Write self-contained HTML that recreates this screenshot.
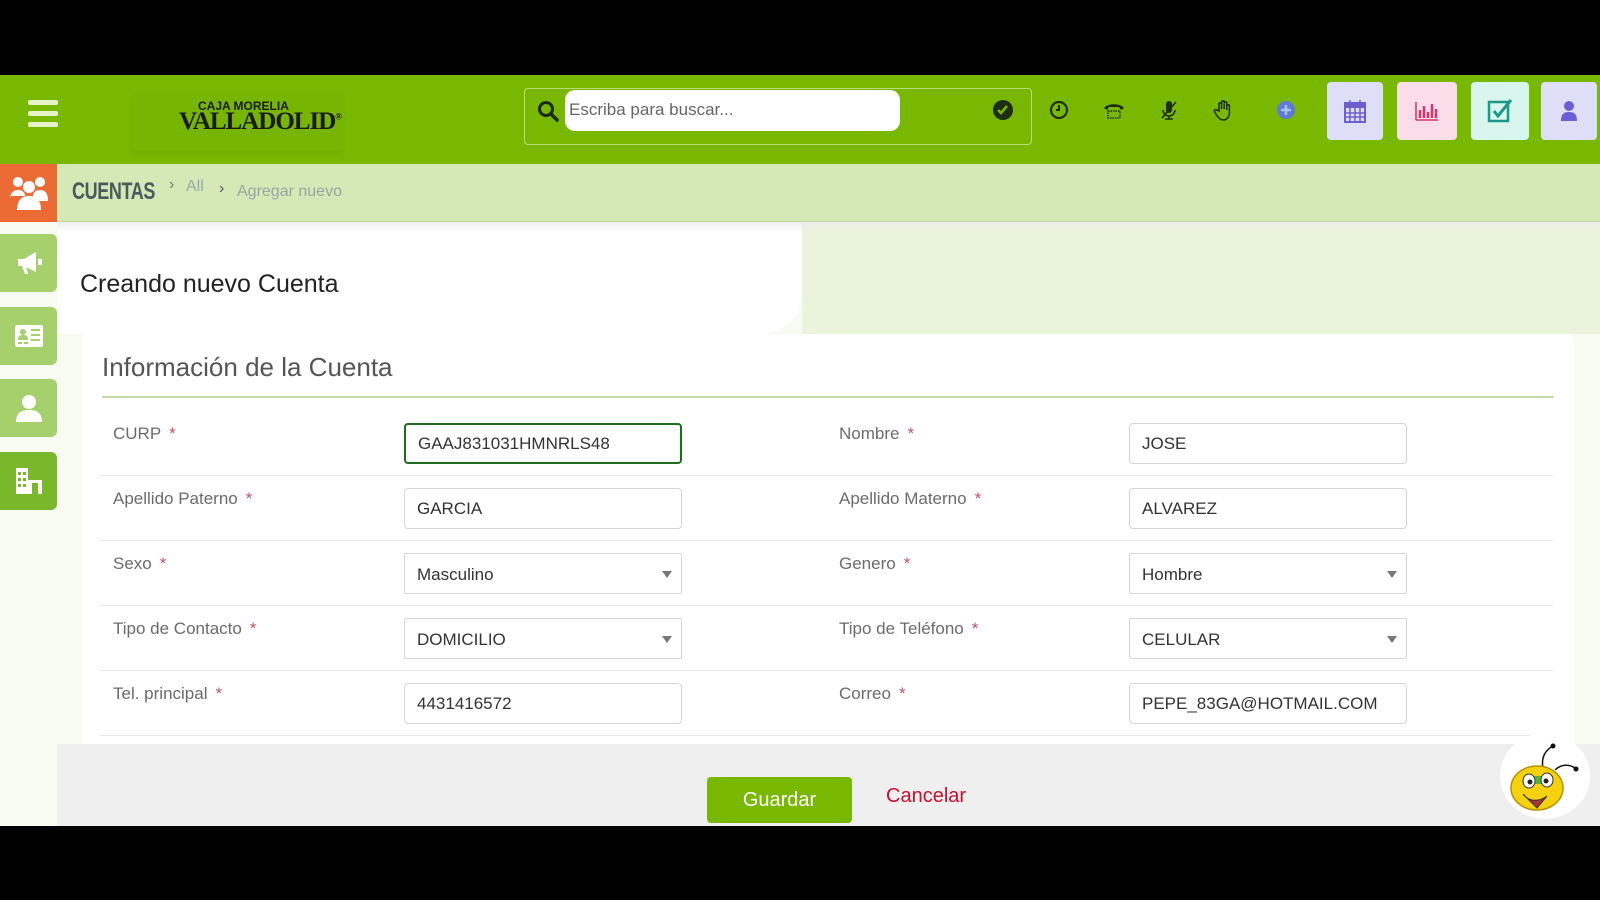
<!DOCTYPE html>
<html><head><meta charset="utf-8"><style>
*{box-sizing:border-box;margin:0;padding:0}
body{width:1600px;height:900px;background:#000;position:relative;overflow:hidden;font-family:"Liberation Sans",sans-serif}
.a{position:absolute}
.hdr{left:0;top:75px;width:1600px;height:89px;background:#79b800}
.bc{left:57px;top:164px;width:1543px;height:58px;background:#d5e9b7;border-bottom:1px solid #c0d89a}
.main{left:0;top:222px;width:1600px;height:604px;background:#f8fbf1}
.lbl{font-size:17px;color:#6b6b6b}
.lbl b{color:#c0506a;font-weight:normal;margin-left:8px}
.inp{height:41px;border:1px solid #d6d6d6;border-radius:4px;background:#fff;font-size:17px;color:#333;padding:0 12px;line-height:40px}
.sel{border-radius:2px}
.sel:after{content:"";position:absolute;right:9px;top:17px;border:5px solid transparent;border-top:7px solid #777;border-bottom:0}
.row{left:100px;width:1453px;height:1px;background:#e8e8e8}
.sb{left:0;width:57px;height:58px;background:#a6d06b;border-radius:0 6px 6px 0;display:flex;align-items:center;justify-content:center}
.tb{top:82px;width:56px;height:58px;border-radius:4px;display:flex;align-items:center;justify-content:center}
.ic{top:98px;width:24px;height:24px}
</style></head><body>
<div class="a hdr"></div>
<div class="a" style="left:28px;top:100px;width:30px;height:5px;background:#e6f2c8;border-radius:2px"></div>
<div class="a" style="left:28px;top:111px;width:30px;height:5px;background:#e6f2c8;border-radius:2px"></div>
<div class="a" style="left:28px;top:122px;width:30px;height:5px;background:#e6f2c8;border-radius:2px"></div>
<div class="a" style="left:133px;top:92px;width:210px;height:58px;background:#77b503;box-shadow:0 5px 6px rgba(0,0,0,.05)"></div>
<div class="a" style="left:198px;top:99px;font-size:12px;font-weight:bold;color:#1a1a1a">CAJA MORELIA</div>
<div class="a" style="left:179px;top:108px;font-family:'Liberation Serif',serif;font-size:25px;font-weight:bold;color:#1a1a1a;letter-spacing:-1px">VALLADOLID<sup style="font-size:9px">®</sup></div>
<div class="a" style="left:524px;top:88px;width:508px;height:57px;border:1px solid #b8dd7a;border-radius:4px"></div>
<svg class="a" style="left:537px;top:100px" width="22" height="22" viewBox="0 0 22 22"><circle cx="9" cy="9" r="6.5" fill="none" stroke="#1b2a10" stroke-width="3"/><path d="M14 14l6 6" stroke="#1b2a10" stroke-width="3.5" stroke-linecap="round"/></svg>
<div class="a" style="left:565px;top:90px;width:335px;height:41px;background:#fff;border-radius:10px;font-size:17px;color:#666;padding:10px 4px">Escriba para buscar...</div>
<svg class="a ic" style="left:991px" viewBox="0 0 24 24"><circle cx="12" cy="12" r="10" fill="#1e2d14"/><path d="M7 12l3 3 6-7" stroke="#79b800" stroke-width="2.5" fill="none"/></svg>
<svg class="a ic" style="left:1047px" viewBox="0 0 24 24"><circle cx="12" cy="12" r="8" fill="none" stroke="#1e2d14" stroke-width="2.2"/><path d="M12 7v5h-3" stroke="#1e2d14" stroke-width="2" fill="none"/></svg>
<svg class="a ic" style="left:1102px" viewBox="0 0 24 24"><path d="M2 10c3-5 17-5 20 0l-3 2-2-3H7l-2 3z" fill="#1e2d14"/><rect x="6" y="13" width="12" height="7" fill="none" stroke="#1e2d14" stroke-width="1.5" stroke-dasharray="1.5 1"/></svg>
<svg class="a ic" style="left:1157px" viewBox="0 0 24 24"><rect x="9" y="3" width="6" height="12" rx="3" fill="#1e2d14"/><path d="M6 12a6 6 0 0012 0M12 18v3M8 21h8M5 20L19 4" stroke="#1e2d14" stroke-width="1.6" fill="none"/></svg>
<svg class="a ic" style="left:1212px" viewBox="0 0 24 24"><path d="M7 13V6a1.3 1.3 0 012.6 0v5V4a1.3 1.3 0 012.6 0v7V5a1.3 1.3 0 012.6 0v7V8a1.3 1.3 0 012.6 0v7c0 4-3 7-6 7s-5-2-7-5l-2-4a1.3 1.3 0 012.3-1z" fill="none" stroke="#1e2d14" stroke-width="1.5"/></svg>
<svg class="a ic" style="left:1274px" viewBox="0 0 24 24"><circle cx="12" cy="12" r="9" fill="#5f7ad8"/><path d="M12 7v10M7 12h10" stroke="#a7c4ff" stroke-width="2.5"/></svg>
<div class="a tb" style="left:1327px;background:#dedff7"><svg width="22" height="24" viewBox="0 0 22 24"><rect x="1" y="4" width="20" height="19" fill="none" stroke="#6b5fd0" stroke-width="2"/><rect x="1" y="4" width="20" height="5" fill="#6b5fd0"/><path d="M6 1v5M16 1v5M1 14h20M1 18h20M6 9v14M11 9v14M16 9v14" stroke="#6b5fd0" stroke-width="1.5"/></svg></div>
<div class="a tb" style="left:1397px;width:60px;background:#fbdde9"><svg width="26" height="22" viewBox="0 0 26 22"><path d="M2 20h22M2 2v18" stroke="#d8336b" stroke-width="1.5"/><path d="M6 10v8M10 6v12M14 12v6M18 4v14M22 9v9" stroke="#d8336b" stroke-width="2.5"/></svg></div>
<div class="a tb" style="left:1471px;width:58px;background:#d8f5ee"><svg width="26" height="26" viewBox="0 0 26 26"><rect x="2" y="4" width="19" height="19" fill="none" stroke="#1a9a86" stroke-width="2.5"/><path d="M7 13l4 5L24 2" stroke="#1a9a86" stroke-width="3" fill="none"/></svg></div>
<div class="a tb" style="left:1541px;background:#dedff7"><svg width="18" height="22" viewBox="0 0 18 22"><circle cx="9" cy="6" r="5" fill="#6a5fd8"/><path d="M1 21c0-7 3-9 8-9s8 2 8 9z" fill="#6a5fd8"/></svg></div>

<div class="a bc"></div>
<div class="a" style="left:0;top:164px;width:57px;height:58px;background:#ec6a34;display:flex;align-items:center;justify-content:center"><svg width="40" height="36" viewBox="0 0 40 36"><g fill="#fff"><circle cx="9" cy="7" r="5"/><circle cx="31" cy="7" r="5"/><circle cx="20" cy="12" r="6"/><path d="M1 26c0-8 3-11 8-11s7 3 7 6H1z"/><path d="M24 21c0-3 2-6 7-6s8 3 8 11H24z"/><path d="M8 35c0-10 5-14 12-14s12 4 12 14z"/></g></svg></div>
<div class="a" style="left:72px;top:178px;font-size:24px;font-weight:bold;color:#4a5a5d;transform:scaleX(.75);transform-origin:left;letter-spacing:-.5px">CUENTAS</div>
<div class="a" style="left:169px;top:176px;font-size:16px;color:#777">›</div>
<div class="a" style="left:186px;top:178px;font-size:16px;color:#9aa">All</div>
<div class="a" style="left:219px;top:180px;font-size:16px;color:#555">›</div>
<div class="a" style="left:237px;top:183px;font-size:16px;color:#9aa4a4">Agregar nuevo</div>

<div class="a main"></div>
<div class="a" style="left:57px;top:222px;width:745px;height:112px;background:#fff;border-radius:0 0 40px 0"></div>
<div class="a" style="left:802px;top:222px;width:798px;height:112px;background:#eaf3dc"></div>
<div class="a" style="left:57px;top:222px;width:1543px;height:10px;background:linear-gradient(#eee,rgba(255,255,255,0))"></div>
<div class="a" style="left:80px;top:270px;font-size:25px;color:#222">Creando nuevo Cuenta</div>

<div class="a sb" style="top:234px"><svg width="30" height="30" viewBox="0 0 30 30"><path d="M4 11h6l12-7v20l-12-6H4z" fill="#fff"/><path d="M8 18l3 8h3l-2-8z" fill="#fff"/><rect x="24" y="11" width="4" height="6" fill="#fff"/></svg></div>
<div class="a sb" style="top:307px"><svg width="30" height="24" viewBox="0 0 30 24"><rect x="1" y="1" width="28" height="22" rx="2" fill="#fff"/><circle cx="9" cy="8" r="3" fill="#a6d06b"/><path d="M4 16c0-4 2-5 5-5s5 1 5 5z" fill="#a6d06b"/><path d="M17 6h9M17 11h9M17 16h9M4 19h4M10 19h4" stroke="#a6d06b" stroke-width="2"/></svg></div>
<div class="a sb" style="top:379px"><svg width="30" height="30" viewBox="0 0 30 30"><circle cx="15" cy="9" r="7" fill="#fff"/><path d="M2 29c0-9 5-12 13-12s13 3 13 12z" fill="#fff"/></svg></div>
<div class="a sb" style="top:452px;background:#79b82b"><svg width="30" height="30" viewBox="0 0 30 30"><rect x="2" y="2" width="12" height="26" fill="#fff"/><rect x="14" y="12" width="14" height="16" fill="#fff"/><g fill="#79b82b"><rect x="4" y="6" width="3" height="3"/><rect x="9" y="6" width="3" height="3"/><rect x="4" y="12" width="3" height="3"/><rect x="9" y="12" width="3" height="3"/><rect x="4" y="18" width="3" height="3"/><rect x="9" y="18" width="3" height="3"/><rect x="18" y="17" width="6" height="11"/><rect x="14" y="12" width="14" height="2"/></g></svg></div>

<div class="a" style="left:82px;top:334px;width:1493px;height:410px;background:#fff;border-radius:6px 6px 0 0"></div>
<div class="a" style="left:102px;top:352px;font-size:26px;color:#555">Información de la Cuenta</div>
<div class="a" style="left:102px;top:396px;width:1452px;height:2px;background:#c9dba4"></div>

<div class="a row" style="top:475px"></div>
<div class="a row" style="top:540px"></div>
<div class="a row" style="top:605px"></div>
<div class="a row" style="top:670px"></div>
<div class="a row" style="top:735px"></div>

<div class="a lbl" style="left:113px;top:424px">CURP<b>*</b></div>
<div class="a lbl" style="left:113px;top:489px">Apellido Paterno<b>*</b></div>
<div class="a lbl" style="left:113px;top:554px">Sexo<b>*</b></div>
<div class="a lbl" style="left:113px;top:619px">Tipo de Contacto<b>*</b></div>
<div class="a lbl" style="left:113px;top:684px">Tel. principal<b>*</b></div>
<div class="a lbl" style="left:839px;top:424px">Nombre<b>*</b></div>
<div class="a lbl" style="left:839px;top:489px">Apellido Materno<b>*</b></div>
<div class="a lbl" style="left:839px;top:554px">Genero<b>*</b></div>
<div class="a lbl" style="left:839px;top:619px">Tipo de Teléfono<b>*</b></div>
<div class="a lbl" style="left:839px;top:684px">Correo<b>*</b></div>

<div class="a inp" style="left:404px;top:423px;width:278px;border:2px solid #1f6b1f;line-height:37px">GAAJ831031HMNRLS48</div>
<div class="a inp" style="left:404px;top:488px;width:278px">GARCIA</div>
<div class="a inp sel" style="left:404px;top:553px;width:278px;line-height:42px">Masculino</div>
<div class="a inp sel" style="left:404px;top:618px;width:278px;line-height:42px">DOMICILIO</div>
<div class="a inp" style="left:404px;top:683px;width:278px">4431416572</div>
<div class="a inp" style="left:1129px;top:423px;width:278px">JOSE</div>
<div class="a inp" style="left:1129px;top:488px;width:278px">ALVAREZ</div>
<div class="a inp sel" style="left:1129px;top:553px;width:278px;line-height:42px">Hombre</div>
<div class="a inp sel" style="left:1129px;top:618px;width:278px;line-height:42px">CELULAR</div>
<div class="a inp" style="left:1129px;top:683px;width:278px">PEPE_83GA@HOTMAIL.COM</div>

<div class="a" style="left:57px;top:744px;width:1543px;height:82px;background:#efefef"></div>
<div class="a" style="left:707px;top:777px;width:145px;height:46px;background:#79b800;border-radius:4px;color:#fff;font-size:20px;text-align:center;line-height:46px">Guardar</div>
<div class="a" style="left:886px;top:785px;font-size:20px;color:#c8102e">Cancelar</div>
<div class="a" style="left:1500px;top:733px;width:90px;height:86px;border-radius:50%;background:#fff"></div>
<svg class="a" style="left:1505px;top:740px" width="80" height="75" viewBox="0 0 80 75"><path d="M38 28c-2-10 2-18 10-22M50 30c6-6 14-6 20-2" stroke="#111" stroke-width="1.5" fill="none"/><circle cx="48" cy="6" r="2.5" fill="#111"/><circle cx="71" cy="29" r="2.5" fill="#111"/><ellipse cx="32" cy="48" rx="26" ry="22" fill="#f5d10e" stroke="#b89000" stroke-width="1.5"/><rect x="20" y="36" width="28" height="8" fill="#5cb030"/><ellipse cx="24" cy="41" rx="6" ry="7" fill="#fff" stroke="#333"/><ellipse cx="42" cy="40" rx="6" ry="7" fill="#fff" stroke="#333"/><circle cx="25" cy="42" r="2.5" fill="#222"/><circle cx="41" cy="41" r="2.5" fill="#222"/><path d="M18 54c6 8 16 8 24 2l-10 12z" fill="#a33" stroke="#333"/></svg>
</body></html>
